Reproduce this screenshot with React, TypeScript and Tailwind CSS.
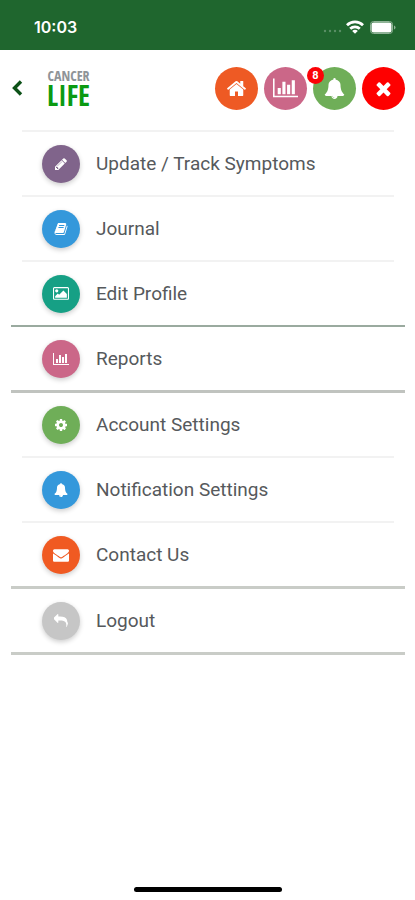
import React from 'react';
import clsx from 'clsx';

type Glyph = { box: string; d: string };

const glyphs = {
  home: {
    box: '0 0 1792 1792',
    d: 'M1472 992v480q0 26-19 45t-45 19h-384v-384h-256v384h-384q-26 0-45-19t-19-45v-480q0-1 .5-3t.5-3l575-474 575 474q1 2 1 6zm223-69l-62 74q-8 9-21 11h-3q-13 0-21-7l-692-577-692 577q-12 8-24 7-13-2-21-11l-62-74q-8-10-7-23.5t11-21.5l719-599q32-26 76-26t76 26l244 204v-195q0-14 9-23t23-9h192q14 0 23 9t9 23v408l219 182q10 8 11 21.5t-7 23.5z',
  },
  chart: {
    box: '0 0 2048 1792',
    d: 'M640 896v512h-256v-512h256zm384-512v1024h-256v-1024h256zm1024 1152v128h-2048v-1536h128v1408h1920zm-640-896v768h-256v-768h256zm384-384v1152h-256v-1152h256z',
  },
  bell: {
    box: '0 0 1792 1792',
    d: 'M912 1696q0-16-16-16-59 0-101.5-42.5t-42.5-101.5q0-16-16-16t-16 16q0 73 51.5 124.5t124.5 51.5q16 0 16-16zm816-288q0 52-38 90t-90 38h-448q0 106-75 181t-181 75-181-75-75-181h-448q-52 0-90-38t-38-90q50-42 91-88t85-119.5 74.5-158.5 50-206 19.5-260q0-152 117-282.5t307-158.5q-8-19-8-39 0-40 28-68t68-28 68 28 28 68q0 20-8 39 190 28 307 158.5t117 282.5q0 139 19.5 260t50 206 74.5 158.5 85 119.5 91 88z',
  },
  times: {
    box: '0 0 1792 1792',
    d: 'M1490 1322q0 40-28 68l-136 136q-28 28-68 28t-68-28l-294-294-294 294q-28 28-68 28t-68-28l-136-136q-28-28-28-68t28-68l294-294-294-294q-28-28-28-68t28-68l136-136q28-28 68-28t68 28l294 294 294-294q28-28 68-28t68 28l136 136q28 28 28 68t-28 68l-294 294 294 294q28 28 28 68z',
  },
  pencil: {
    box: '0 0 1792 1792',
    d: 'M491 1536l91-91-235-235-91 91v107h128v128h107zm523-928q0-22-22-22-10 0-17 7l-542 542q-7 7-7 17 0 22 22 22 10 0 17-7l542-542q7-7 7-17zm-54-192l416 416-832 832h-416v-416zm683 96q0 53-37 90l-166 166-416-416 166-165q36-38 90-38 53 0 91 38l235 234q37 39 37 91z',
  },
  book: {
    box: '0 0 1792 1792',
    d: 'M1703 478q40 57 18 129l-275 906q-19 64-76.5 107.5t-122.500 43.5h-923q-77 0-148.500-53.5t-99.500-131.500q-24-67-2-127 0-4 3-27t4-37q1-8-3-21.500t-3-19.500q2-11 8-21t16.500-23.500 16.500-23.500q23-38 45-91.500t30-91.500q3-10 .5-30t-.5-28q3-11 17-28t17-23q21-36 42-92t25-90q1-9-2.500-32t.5-28q4-13 22-30.500t22-22.500q19-26 42.500-84.500t27.500-96.500q1-8-3-25.500t-2-26.500q2-8 9-18t18-23 17-21q8-12 16.500-30.500t15-35 16-36 19.500-32 26.500-23.500 36-11.500 47.500 5.500l-1 3q38-9 51-9h761q74 0 114 56t18 130l-274 906q-36 119-71.500 153.500t-128.500 34.500h-869q-27 0-38 15-11 16-1 43 24 70 144 70h923q29 0 56-15.500t35-41.500l300-987q7-22 5-57 38 15 59 43zm-1064 2q-4 13 2 22.500t20 9.500h608q13 0 25.500-9.500t16.500-22.500l21-64q4-13-2-22.500t-20-9.500h-608q-13 0-25.500 9.500t-16.500 22.500zm-83 256q-4 13 2 22.500t20 9.500h608q13 0 25.500-9.500t16.500-22.500l21-64q4-13-2-22.500t-20-9.500h-608q-13 0-25.500 9.500t-16.500 22.500z',
  },
  picture: {
    box: '0 0 1920 1792',
    d: 'M640 576q0 80-56 136t-136 56-136-56-56-136 56-136 136-56 136 56 56 136zm1024 384v448h-1408v-192l320-320 160 160 512-512zm96-704h-1600q-13 0-22.5 9.5t-9.5 22.5v1216q0 13 9.5 22.5t22.5 9.5h1600q13 0 22.5-9.5t9.5-22.5v-1216q0-13-9.5-22.5t-22.5-9.5zm160 32v1216q0 66-47 113t-113 47h-1600q-66 0-113-47t-47-113v-1216q0-66 47-113t113-47h1600q66 0 113 47t47 113z',
  },
  cog: {
    box: '0 0 1792 1792',
    d: 'M1152 896q0-106-75-181t-181-75-181 75-75 181 75 181 181 75 181-75 75-181zm512-109v222q0 12-8 23t-20 13l-185 28q-19 54-39 91 35 50 107 138 10 12 10 25t-9 23q-27 37-99 108t-94 71q-12 0-26-9l-138-108q-44 23-91 38-16 136-29 186-7 28-36 28h-222q-14 0-24.5-8.5t-11.5-21.5l-28-184q-49-16-90-37l-141 107q-10 9-25 9-14 0-25-11-126-114-165-168-7-10-7-23 0-12 8-23 15-21 51-66.5t54-70.5q-27-50-41-99l-183-27q-13-2-21-12.5t-8-23.5v-222q0-12 8-23t19-13l186-28q14-46 39-92-40-57-107-138-10-12-10-24 0-10 9-23 26-36 98.5-107.5t94.5-71.5q13 0 26 10l138 107q44-23 91-38 16-136 29-186 7-28 36-28h222q14 0 24.5 8.5t11.5 21.5l28 184q49 16 90 37l142-107q9-9 24-9 13 0 25 10 129 119 165 170 7 8 7 22 0 12-8 23-15 21-51 66.5t-54 70.5q26 50 41 98l183 28q13 2 21 12.5t8 23.5z',
  },
  envelope: {
    box: '0 0 1792 1792',
    d: 'M1792 710v794q0 66-47 113t-113 47h-1472q-66 0-113-47t-47-113v-794q44 49 101 87 362 246 497 345 57 42 92.5 65.5t94.5 48 110 24.5h2q51 0 110-24.5t94.5-48 92.5-65.5q170-123 498-345 57-39 100-87zm0-294q0 79-49 151t-122 123q-376 261-468 325-10 7-42.5 30.5t-54 38-52 32.5-57.5 27-50 9h-2q-23 0-50-9t-57.5-27-52-32.5-54-38-42.5-30.5q-91-64-262-182.5t-205-142.5q-62-42-117-115.500t-55-136.500q0-78 41.500-130t118.500-52h1472q65 0 112.500 47t47.500 113z',
  },
  reply: {
    box: '0 0 1792 1792',
    d: 'M1792 1120q0 166-127 451-3 7-10.5 24t-13.500 30-13 22q-12 17-28 17-15 0-23.500-10t-8.500-25q0-9 2.500-26.500t2.500-23.500q5-68 5-123 0-112-19.500-200.500t-54-153.500-89-112-118-78-149-48.500-172.500-25.500-198.500-8h-224v256q0 26-19 45t-45 19-45-19l-512-512q-19-19-19-45t19-45l512-512q19-19 45-19t45 19 19 45v256h224q713 0 875 403 53 134 53 333z',
  },
} satisfies Record<string, Glyph>;

type GlyphName = keyof typeof glyphs;

const Icon: React.FC<{ name: GlyphName; className: string }> = ({ name, className }) => (
  <svg viewBox={glyphs[name].box} fill="currentColor" aria-hidden="true" className={className}>
    <path d={glyphs[name].d} />
  </svg>
);

type Item = { label: string; icon: GlyphName; color: string; size: string };

const menuGroups: { border: string; items: Item[] }[] = [
  {
    border: '',
    items: [
      { label: 'Update / Track Symptoms', icon: 'pencil', color: 'bg-[#80648b]', size: 'w-[14px]' },
      { label: 'Journal', icon: 'book', color: 'bg-[#3498db]', size: 'w-[14px]' },
      { label: 'Edit Profile', icon: 'picture', color: 'bg-[#16a085]', size: 'w-[16px]' },
    ],
  },
  {
    border: 'border-t-2 border-[#9aaa9f]',
    items: [{ label: 'Reports', icon: 'chart', color: 'bg-[#cb6788]', size: 'w-[16px]' }],
  },
  {
    border: 'border-t-3 border-[#c0c3bf]',
    items: [
      { label: 'Account Settings', icon: 'cog', color: 'bg-[#6fae58]', size: 'w-[14px]' },
      { label: 'Notification Settings', icon: 'bell', color: 'bg-[#3498db]', size: 'w-[14px]' },
      { label: 'Contact Us', icon: 'envelope', color: 'bg-[#f05a22]', size: 'w-[16px]' },
    ],
  },
  {
    border: 'border-y-3 border-[#c9ccc7]',
    items: [{ label: 'Logout', icon: 'reply', color: 'bg-[#c6c6c6]', size: 'w-[14px]' }],
  },
];

const StatusBar: React.FC = () => (
  <div className="h-[50px] bg-[#1f662e] pl-[34px] pr-[19px] pt-1 flex items-center justify-between text-white">
    <span className="font-['Inter',sans-serif] text-[16px] leading-5 font-semibold">10:03</span>
    <div className="flex items-center">
      <svg width="19" height="14" viewBox="0 0 19 14" className="mr-1" fill="#5b8f66" aria-hidden="true">
        <circle cx="2" cy="11" r="1.2" />
        <circle cx="7" cy="11" r="1.2" />
        <circle cx="12" cy="11" r="1.2" />
        <circle cx="17" cy="11" r="1.2" />
      </svg>
      <svg width="18" height="14" viewBox="0 0 18 14" fill="none" stroke="currentColor" strokeWidth="2.8" className="mr-1.5" aria-hidden="true">
        <path d="M1 5.2a11.5 11.5 0 0 1 16 0" />
        <path d="M4.2 8.7a7 7 0 0 1 9.600 0" />
        <path d="M9 13.8L6.2 11a3.900 3.900 0 0 1 5.600 0z" fill="currentColor" stroke="none" />
      </svg>
      <svg width="26" height="13" viewBox="0 0 26 13" aria-hidden="true">
        <rect x="0.5" y="0.5" width="22" height="12" rx="3" fill="none" stroke="#8fb396" />
        <rect x="1.5" y="1.5" width="20" height="10" rx="2" fill="currentColor" />
        <path d="M24 4.500v4q1.500-.6 1.500-2T24 4.500z" fill="#8fb396" />
      </svg>
    </div>
  </div>
);

const RoundButton: React.FC<{ label: string; icon: GlyphName; color: string; size: string; badge?: string }> = ({
  label,
  icon,
  color,
  size,
  badge,
}) => (
  <button
    type="button"
    aria-label={label}
    className={clsx('relative size-[43px] rounded-full flex items-center justify-center text-white', color)}
  >
    <Icon name={icon} className={size} />
    {badge && (
      <span className="absolute -left-1.5 top-0 size-[17px] rounded-full bg-[#fb0207] text-[11px] leading-[17px] font-bold text-center">
        {badge}
      </span>
    )}
  </button>
);

const Header: React.FC = () => (
  <header className="h-20 pl-3 pr-[10px] pb-1 flex items-center">
    <button type="button" aria-label="Back" className="text-[#0d5218]">
      <svg width="11" height="16" viewBox="0 0 11 16" fill="none" stroke="currentColor" strokeWidth="3.4" aria-hidden="true">
        <path d="M9 1.5L2.5 8 9 14.5" />
      </svg>
    </button>
    <a
      href="#"
      className="ml-6 flex flex-col items-center font-['Noto_Sans_ExtraCondensed','Open_Sans_Condensed','Roboto_Condensed','Liberation_Sans_Narrow',sans-serif]"
    >
      <span className="text-[14px] leading-[14px] text-[#8f9498]">CANCER</span>
      <span className="text-[28px] leading-6 font-semibold text-[#0b9a12]">LIFE</span>
    </a>
    <nav className="ml-auto flex gap-1.5">
      <RoundButton label="Home" icon="home" color="bg-[#ee5a24]" size="w-[21px]" />
      <RoundButton label="Reports" icon="chart" color="bg-[#cb6788]" size="w-[25px]" />
      <RoundButton label="Notifications" icon="bell" color="bg-[#6fae58]" size="w-[21px]" badge="8" />
      <RoundButton label="Close" icon="times" color="bg-[#fe0000]" size="w-[21px]" />
    </nav>
  </header>
);

const MenuRow: React.FC<{ item: Item; divided: boolean }> = ({ item, divided }) => (
  <li className={clsx('mx-[11px]', divided && 'border-t-2 border-[#f2f2f2]')}>
    <a href="#" className="h-[63px] pl-5 flex items-center gap-4">
      <span className={clsx('size-[38px] rounded-full flex items-center justify-center text-white shadow-[0_2px_5px_rgba(0,0,0,0.2)]', item.color)}>
        <Icon name={item.icon} className={item.size} />
      </span>
      <span className="text-[19px] leading-6 text-[#56595c]">{item.label}</span>
    </a>
  </li>
);

export default function App() {
  return (
    <div className="min-h-screen bg-white flex flex-col font-['Roboto',sans-serif]">
      <StatusBar />
      <Header />

      <main>
        {menuGroups.map((group, idx) => (
          <ul key={idx} className={clsx('ml-[11px] mr-[10px]', group.border)}>
            {group.items.map((item, i) => (
              <MenuRow key={item.label} item={item} divided={idx === 0 || i > 0} />
            ))}
          </ul>
        ))}
      </main>

      {/* Home indicator */}
      <div className="mt-auto mb-[8px] mx-auto h-[5px] w-[148px] rounded-full bg-black" />
    </div>
  );
}
